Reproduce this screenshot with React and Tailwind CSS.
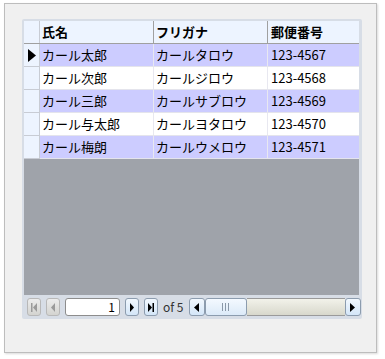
const rows = [
  ["カール太郎", "カールタロウ", "123-4567"],
  ["カール次郎", "カールジロウ", "123-4568"],
  ["カール三郎", "カールサブロウ", "123-4569"],
  ["カール与太郎", "カールヨタロウ", "123-4570"],
  ["カール梅朗", "カールウメロウ", "123-4571"],
]

const font = { fontFamily: '"Noto Sans CJK JP", "Noto Sans", sans-serif' }

function NavButton({ disabled, children }) {
  return (
    <div
      className={
        disabled
          ? "shrink-0 w-[14px] h-[18px] rounded-[3px] border border-[#b8b8b8] bg-gradient-to-b from-[#ececec] to-[#d4d4d0] flex items-center justify-center"
          : "shrink-0 w-[14px] h-[18px] rounded-[3px] border border-[#8c9cae] bg-gradient-to-b from-[#f2f8fe] to-[#d4e6f8] flex items-center justify-center"
      }
    >
      {children}
    </div>
  )
}

export default function App() {
  return (
    <div className="w-[385px] h-[359px] bg-white pt-[3px] pl-[4px]" style={font}>
      <div className="w-[373px] h-[350px] bg-[#f0f0f0] border border-[#bdbdbd] shadow-[1px_1px_2px_rgba(0,0,0,0.15)] pt-[15px] pl-[17px]">
        <div className="w-[340px] h-[300px] bg-[#d7dde6] rounded-[2px] pt-[2px] pl-[2px] pr-[3px] flex flex-col">
          {/* header */}
          <div className="flex h-[23px] bg-[#edf4ff] border-b border-[#a0a0a0] text-[13px] font-bold text-black">
            <div className="w-[16px] border-r border-[#c8ccd4]" />
            <div className="w-[114px] border-r border-[#a0a0a0] pl-[2px] leading-[22px]">氏名</div>
            <div className="w-[114px] border-r border-[#a0a0a0] pl-[2px] leading-[22px]">フリガナ</div>
            <div className="flex-1 pl-[3px] leading-[22px]">郵便番号</div>
          </div>
          {rows.map((r, i) => (
            <div key={i} className="flex h-[23px] text-[13px] text-black">
              <div className="w-[16px] bg-[#edf4ff] border-r border-b border-[#c8ccd4] flex items-center justify-center">
                {i === 0 && (
                  <svg width="8" height="13" viewBox="0 0 8 13">
                    <path d="M0 0 L8 6.5 L0 13 Z" fill="#000" />
                  </svg>
                )}
              </div>
              <div
                className={
                  "flex-1 flex border-b border-[#e4e4ec] " +
                  (i % 2 === 0 ? "bg-[#ccccff]" : "bg-white")
                }
              >
                <div className="w-[114px] border-r border-[#e8e8f0] pl-[2px] leading-[22px]">{r[0]}</div>
                <div className="w-[114px] border-r border-[#e8e8f0] pl-[2px] leading-[22px]">{r[1]}</div>
                <div className="flex-1 pl-[3px] leading-[22px]">{r[2]}</div>
              </div>
            </div>
          ))}
          <div className="flex-1 bg-[#9fa3aa]" />
          {/* pager */}
          <div className="h-[24px] flex items-center pl-[3px] gap-[5px] text-[13px]">
            <NavButton disabled>
              <svg width="8" height="9" viewBox="0 0 8 9">
                <rect x="1" y="0" width="1.5" height="9" fill="#9a9a9a" />
                <path d="M7 0 L3 4.5 L7 9 Z" fill="#9a9a9a" />
              </svg>
            </NavButton>
            <NavButton disabled>
              <svg width="6" height="9" viewBox="0 0 6 9">
                <path d="M5 0 L1 4.5 L5 9 Z" fill="#9a9a9a" />
              </svg>
            </NavButton>
            <div className="shrink-0 w-[55px] h-[18px] rounded-[3px] border border-[#8d8d8d] bg-white text-right pr-[4px] leading-[16px] text-[12px] text-black">
              1
            </div>
            <NavButton>
              <svg width="6" height="9" viewBox="0 0 6 9">
                <path d="M1 0 L5 4.5 L1 9 Z" fill="#000" />
              </svg>
            </NavButton>
            <NavButton>
              <svg width="8" height="9" viewBox="0 0 8 9">
                <path d="M1 0 L5 4.5 L1 9 Z" fill="#000" />
                <rect x="5.5" y="0" width="1.5" height="9" fill="#000" />
              </svg>
            </NavButton>
            <span className="shrink-0 whitespace-nowrap text-[12px] text-[#333] leading-[18px]">of 5</span>
            <div className="shrink-0 w-[172px] h-[18px] flex">
              <div className="w-[16px] h-[18px] rounded-[3px] border border-[#8c9cae] bg-gradient-to-b from-[#f2f8fe] to-[#d4e6f8] flex items-center justify-center">
                <svg width="7" height="9" viewBox="0 0 7 9">
                  <path d="M6 0 L1 4.5 L6 9 Z" fill="#000" />
                </svg>
              </div>
              <div className="w-[42px] h-[18px] rounded-[3px] border border-[#8c9cae] bg-gradient-to-b from-[#f4f9ff] to-[#dceaf8] flex items-center justify-center gap-[2px]">
                <div className="w-px h-[8px] bg-[#8a98a8]" />
                <div className="w-px h-[8px] bg-[#8a98a8]" />
                <div className="w-px h-[8px] bg-[#8a98a8]" />
              </div>
              <div className="flex-1 h-[18px] border-y border-[#9a9a9a] bg-gradient-to-b from-[#f2f2ea] to-[#d8d8cc]" />
              <div className="w-[16px] h-[18px] rounded-[3px] border border-[#8c9cae] bg-gradient-to-b from-[#f2f8fe] to-[#d4e6f8] flex items-center justify-center">
                <svg width="7" height="9" viewBox="0 0 7 9">
                  <path d="M1 0 L6 4.5 L1 9 Z" fill="#000" />
                </svg>
              </div>
            </div>
          </div>
        </div>
      </div>
    </div>
  )
}
